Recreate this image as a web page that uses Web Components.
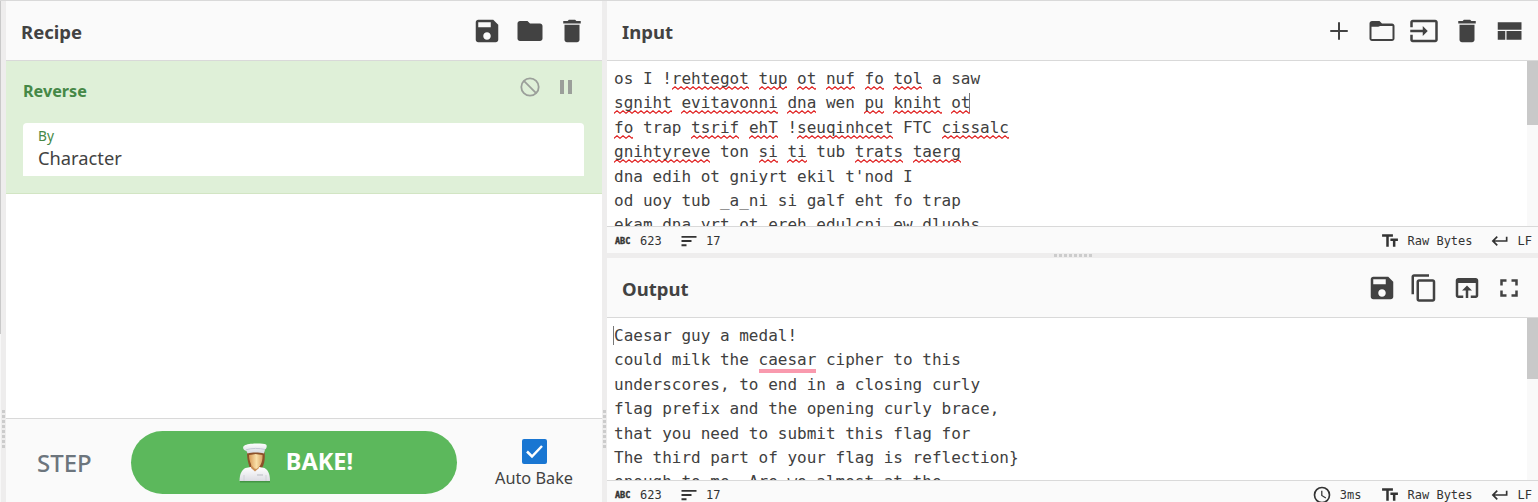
<!DOCTYPE html>
<html lang="en">
<head>
<meta charset="utf-8">
<title>Recipe workbench</title>
<style>
html,body{margin:0;height:100%;overflow:hidden}
body{font-family:"Noto Sans","Open Sans",sans-serif;color:#424242;background:#fff}
</style>
</head>
<body>
<chef-app></chef-app>
<script>
const ICONS={
save:'<path d="M17 3H5c-1.11 0-2 .9-2 2v14c0 1.1.89 2 2 2h14c1.1 0 2-.9 2-2V7l-4-4zm-5 16c-1.66 0-3-1.34-3-3s1.34-3 3-3 3 1.34 3 3-1.34 3-3 3zm3-10H5V5h10v4z"/>',
folder:'<path d="M10 4H4c-1.1 0-2 .9-2 2v12c0 1.1.9 2 2 2h16c1.1 0 2-.9 2-2V8c0-1.1-.9-2-2-2h-8l-2-2z"/>',
open:'<path d="M20 6h-8l-2-2H4c-1.1 0-2 .9-2 2v12c0 1.1.9 2 2 2h16c1.1 0 2-.9 2-2V8c0-1.1-.9-2-2-2zm.4 12.400H3.600V8H20.400v10.400z"/><path d="M3 5h7l2 2.300-3 1.200H3z"/>',
trash:'<path d="M6 19c0 1.1.9 2 2 2h8c1.1 0 2-.9 2-2V7H6v12zM19 4h-3.5l-1-1h-5l-1 1H5v2h14V4z"/>',
add:'<path d="M19 12.8h-6.2V19h-1.6v-6.2H5v-1.6h6.2V5h1.6v6.2H19z"/>',
input:'<path d="M21 3.01H3c-1.1 0-2 .9-2 2V9h2V4.99h18v14.03H3V15H1v4.01c0 1.1.9 1.98 2 1.98h18c1.1 0 2-.88 2-1.98v-14c0-1.11-.9-2-2-2zM11 16l4-4-4-4v3H1v2h10v3z"/>',
layout:'<path d="M3 19h6v-7H3v7zm7 0h12v-7H10v7zM3 5v6h19V5H3z"/>',
copy:'<path d="M16 1H4c-1.1 0-2 .9-2 2v14h2V3h12V1zm3 4H8c-1.1 0-2 .9-2 2v14c0 1.1.9 2 2 2h11c1.1 0 2-.9 2-2V7c0-1.1-.9-2-2-2zm0 16H8V7h11v14z"/>',
browser:'<path d="M19 4H5c-1.11 0-2 .9-2 2v12c0 1.1.89 2 2 2h4v-2H5V8h14v10h-4v2h4c1.1 0 2-.9 2-2V6c0-1.1-.89-2-2-2zm-7 6l-4 4h3v6h2v-6h3l-4-4z"/>',
full:'<path d="M7 14H5v5h5v-2H7v-3zm-2-4h2V7h3V5H5v5zm12 7h-3v2h5v-5h-2v3zM14 5v2h3v3h2V5h-5z"/>',
block:'<g fill="none" stroke="currentColor" stroke-width="1.8"><circle cx="12" cy="12" r="8.700"/><path d="M5.9 5.9l12.200 12.200"/></g>',
pause:'<path d="M6 19h4V5H6v14zm8-14v14h4V5h-4z"/>',
lines:'<path d="M3 18.200h6v-2.300H3v2.300zM3 5.900v2.300h18V5.900H3zm0 7.200h12v-2.300H3v2.300z"/>',
text:'<path d="M2.5 4v3h5v12h3V7h5V4h-13zm19 5h-9v3h3v7h3v-7h3V9z"/>',
ret:'<path d="M19 7v4H5.83l3.58-3.59L8 6l-6 6 6 6 1.41-1.41L5.83 13H21V7z"/>',
clock:'<path d="M12 2a10 10 0 1 0 0 20 10 10 0 0 0 0-20zm0 18a8 8 0 1 1 0-16 8 8 0 0 1 0 16zm.5-13H11v6l5.25 3.15.75-1.23-4.5-2.67z"/>'
};
function define(name,render){
  customElements.define(name,class extends HTMLElement{
    constructor(){super();this.attachShadow({mode:'open'});}
    connectedCallback(){this.shadowRoot.innerHTML=render(this);}
  });
}
define('md-icon',el=>`<style>:host{display:block;width:var(--icon,30px);height:var(--icon,30px);flex:none}svg{display:block;width:100%;height:100%;fill:currentColor}</style><svg viewBox="0 0 24 24">${ICONS[el.getAttribute('name')]}</svg>`);

define('pane-header',()=>`<style>
:host{display:flex;align-items:center;height:59px;flex:none;background:#fafafa;border-bottom:1px solid #d9d9d9;padding:0 var(--end,15px) 0 15px}
.title{flex:1;font-weight:700;font-size:18.5px;line-height:26px;padding-top:3px;color:#424242}
.tools{display:flex;gap:12.5px}
</style><div class="title"><slot></slot></div><div class="tools"><slot name="tool"></slot></div>`);

define('drag-handle',el=>{
  const v=el.hasAttribute('vertical');
  return `<style>
:host{display:flex;flex:none;align-items:center;justify-content:center;background:#eeeded;${v?'width:5px':'height:5px'}}
i{display:block;${v?'width:3px;height:38px;background:repeating-linear-gradient(180deg,#ccc 0 3px,transparent 3px 5px)':'height:3px;width:38px;margin-left:1px;background:repeating-linear-gradient(90deg,#ccc 0 3px,transparent 3px 5px)'}}
:host([vertical]){box-sizing:border-box;padding-top:354px}
</style><i></i>`;});

define('recipe-operation',()=>`<style>
:host{display:block;box-sizing:border-box;height:133px;background:#dff0d8;border-bottom:1px solid #d2e5c3;padding:15px 18px 0 17px}
.head{display:flex;height:30px;align-items:center;color:#468847}
b{flex:1;font-size:16.200px;line-height:24px}
.tools{display:flex;gap:11.5px;color:#9b9f9a;--icon:24px;padding:0 6.500px 8px 0}
.arg{margin-top:17px;height:53px;box-sizing:border-box;background:#fff;border-radius:4px 4px 0 0;padding:4px 15px}
label{display:block;font-size:13.7px;line-height:18px;color:#468847}
.value{font-size:18.300px;line-height:24px;padding-top:1px;color:#424242}
</style><div class="head"><b>Reverse</b><div class="tools"><md-icon name="block"></md-icon><md-icon name="pause"></md-icon></div></div>
<div class="arg"><label>By</label><div class="value">Character</div></div>`);

define('chef-figure',()=>`<style>:host{display:block;width:34px;height:40px}svg{display:block}</style>
<svg width="34" height="40" viewBox="0 0 34 40"><defs>
<linearGradient id="h" x2="0" y2="1"><stop stop-color="#fff"/><stop offset="1" stop-color="#d5d8df"/></linearGradient>
<linearGradient id="f" x2="1"><stop stop-color="#d89a58"/><stop offset=".55" stop-color="#fae0a8"/><stop offset="1" stop-color="#d9a466"/></linearGradient>
<linearGradient id="c" x2="0" y2="1"><stop stop-color="#fff"/><stop offset="1" stop-color="#dcdce3"/></linearGradient></defs>
<path d="M2 38h30v1.500H2z" fill="#337d36" opacity=".6"/>
<path d="M9 9h17.500c.8 6 0 12-2.500 16L11.500 24C9.500 18 9 14 9 9z" fill="#8d5129"/>
<path d="M1.500 38c.2-7 2-11 6-13l5.500-1h8l5.500 1c4 2 5.500 7 5.500 13z" fill="url(#c)"/>
<path d="M13 20h8v5l-4 3.500-4-3.500z" fill="#cb9056"/>
<path d="M11 12c3 0 5-1 6.500-1s5 1 7 1c.4 6-2 13-6.500 14-4-1-7-7.500-7-14z" fill="url(#f)"/>
<path d="M6.500 2.500C10 0 25 0 28 1.500c1.500 1.300.4 4-1 5L26 10.500c-5-1.300-12-1.300-16.500 0L8.500 8C5 7 4 4 6.500 2.500z" fill="url(#h)"/>
<path d="M8 6.800C14 5 21 5 27 6.500" fill="none" stroke="#c5cad5"/>
<path d="M19 32h6" stroke="#b9bbc3"/><path d="M6 32v6M28 32v6" stroke="#d1d2d8"/>
</svg>`);

define('bake-controls',()=>`<style>
:host{display:grid;grid-template-columns:125px 326px 1fr;box-sizing:border-box;height:84px;flex:none;border-top:1px solid #d9d9d9;background:#fafafa}
.step{font-size:24px;font-weight:500;line-height:32px;color:#6c757d;padding:28px 0 0 31px}
.bake{box-sizing:border-box;margin-top:12px;height:63px;border-radius:32px;background:#5cb85c;color:#fff;display:flex;align-items:center;justify-content:center;gap:14px;font-size:23.500px;font-weight:700;padding-left:3px}
.bake span{line-height:32px;padding-bottom:4px}
.auto{display:flex;flex-direction:column;align-items:center;padding:20px 0 0 9px;font-size:16.300px;line-height:24px}
.box{width:25px;height:25px;background:#1976d2;border-radius:2px;margin-bottom:2px}
.box svg{display:block}
</style><div class="step">STEP</div><div class="bake"><chef-figure></chef-figure><span>BAKE!</span></div>
<div class="auto"><div class="box"><svg width="25" height="25" fill="none" stroke="#fff" stroke-width="2.500"><path d="M5 12.500l5 5L20 7"/></svg></div>Auto Bake</div>`);

define('text-view',()=>`<style>
:host{display:flex;flex:1;min-height:0;overflow:hidden;background:#fff}
.text{flex:1;overflow:hidden;padding:6px 0 0 7px;font:16px/24.400px "DejaVu Sans Mono",monospace;color:#404040;white-space:pre}
.bar{width:11px;background:#f9f9f9}
.thumb{height:var(--thumb,64px);background:#c9c9c9}
</style><div class="text"><slot></slot></div><div class="bar"><div class="thumb"></div></div>`);

define('misspelt-word',()=>`<style>:host{display:inline;padding-bottom:2px;background:url("data:image/svg+xml,%3Csvg xmlns='http://www.w3.org/2000/svg' width='6' height='4'%3E%3Cpath d='M-1 4L0 3.200L3 .8L6 3.200L7 4' fill='none' stroke='%23e02020' stroke-width='1.200'/%3E%3C/svg%3E") left bottom/6px 4px repeat-x}</style><slot></slot>`);
define('hinted-word',()=>`<style>:host{display:inline;border-bottom:4px solid #f99aae;padding-bottom:0}</style><slot></slot>`);
define('text-caret',()=>`<style>:host{display:inline-block;width:1px;height:19px;margin:0 0 0 -1px;background:#777;vertical-align:-4px}</style>`);

define('status-bar',el=>`<style>
:host{display:flex;align-items:center;height:26px;flex:none;box-sizing:content-box;border-top:1px solid #d9d9d9;background:#fafafa;--icon:20px;font:12px/16px "DejaVu Sans Mono",monospace;color:#333;padding:0 6px 0 8px}
.abc{font:700 8.500px/12px "DejaVu Sans Mono",monospace;width:25px;-webkit-text-stroke:.4px #333}
.n{width:39px}.lines{margin-right:7px}
md-icon{padding-top:1px}
.grow{flex:1}
.txt{margin-right:17px;margin-left:8px}.ret{margin-left:8px}
.time{margin:0 18px 0 8px}
span{padding-top:2px}
</style><span class="abc">ABC</span><span class="n">623</span><md-icon class="lines" name="lines"></md-icon><span>17</span><div class="grow"></div>${el.hasAttribute('time')?`<md-icon name="clock"></md-icon><span class="time">${el.getAttribute('time')}</span>`:''}<md-icon name="text"></md-icon><span class="txt">Raw Bytes</span><md-icon name="ret"></md-icon><span class="ret">LF</span>`);

const mark=s=>s.replace(/\[(.+?)\]/g,'<misspelt-word>$1</misspelt-word>');
const inputText=mark(`os I ![rehtegot] [tup] [ot] [nuf] [fo] [tol] a saw
[sgniht] [evitavonni] [dna] wen [pu] [kniht] [ot]<text-caret></text-caret>
[fo] trap [tsrif] [ehT] ![seuqinhcet] FTC [cissalc]
[gnihtyreve] ton [si] [ti] tub [trats] [taerg]
dna edih ot gniyrt ekil t'nod I
od uoy tub _a_ni si galf eht fo trap
ekam dna yrt ot ereh edulcni ew dluohs`);
const outputText=`<text-caret></text-caret>Caesar guy a medal!
could milk the <hinted-word>caesar</hinted-word> cipher to this
underscores, to end in a closing curly
flag prefix and the opening curly brace,
that you need to submit this flag for
The third part of your flag is reflection}
enough to me. Are we almost at the`;

const tools=names=>names.map(n=>`<md-icon slot="tool" name="${n}"></md-icon>`).join('');
define('chef-app',()=>`<style>
:host{display:grid;grid-template-columns:1px 5px 596px 5px 1fr;height:502px;box-sizing:border-box;border-top:1px solid #d9d9d9;overflow:hidden}
.edge{background:linear-gradient(#c9c9c9 0 333px,#f7f7f7 333px)}
.col{display:flex;flex-direction:column;min-width:0;min-height:0;overflow:hidden}
.list{flex:1}
.io{height:252px;display:flex;flex-direction:column;flex:none}
.out{height:249px}
</style>
<div class="edge"></div><drag-handle vertical></drag-handle>
<section class="col recipe"><pane-header>Recipe${tools(['save','folder','trash'])}</pane-header><div class="list"><recipe-operation></recipe-operation></div><bake-controls></bake-controls></section>
<drag-handle vertical></drag-handle>
<section class="col">
<div class="io"><pane-header style="--end:14px">Input${tools(['add','open','input','trash','layout'])}</pane-header><text-view>${inputText}</text-view><status-bar></status-bar></div>
<drag-handle></drag-handle>
<div class="io out"><pane-header style="--end:14px">Output${tools(['save','copy','browser','full'])}</pane-header><text-view style="--thumb:61px">${outputText}</text-view><status-bar time="3ms"></status-bar></div>
</section>`);
</script>
</body>
</html>
